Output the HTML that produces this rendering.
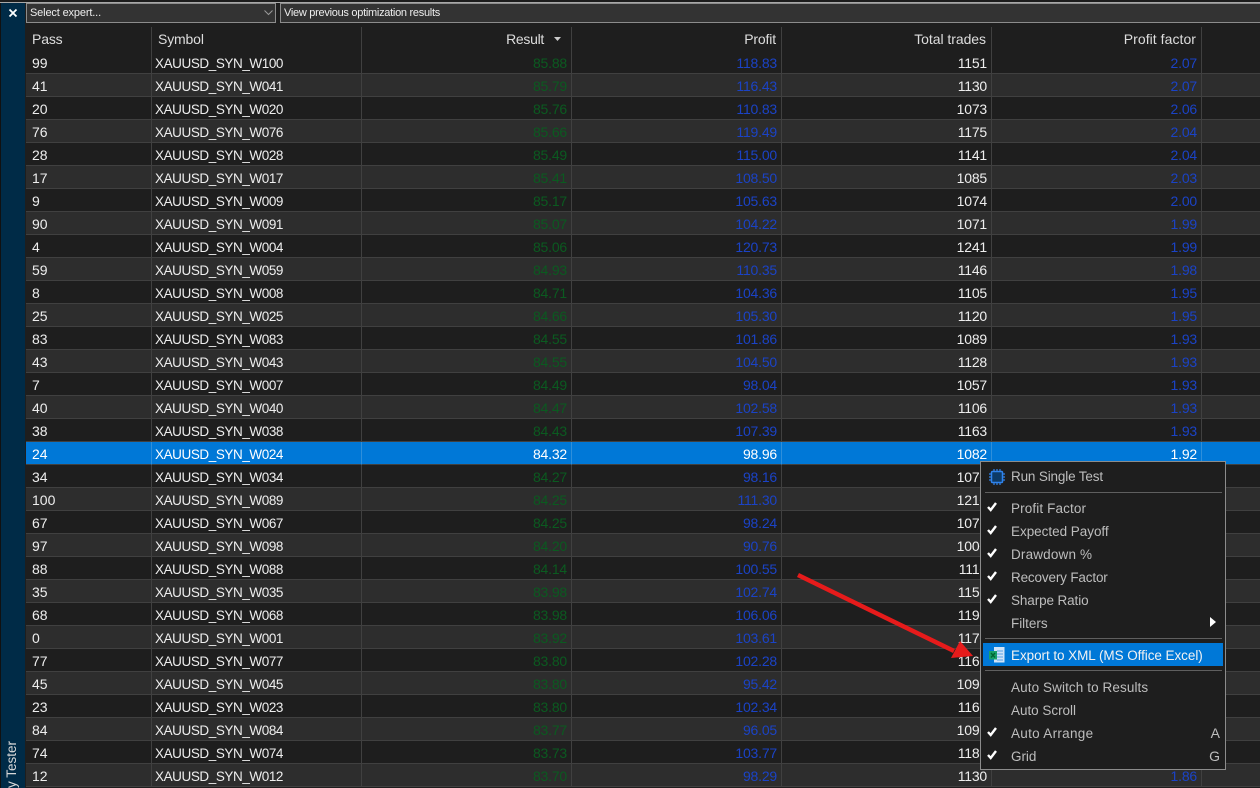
<!DOCTYPE html>
<html><head><meta charset="utf-8"><title>Strategy Tester</title>
<style>
html,body{margin:0;padding:0;width:1260px;height:788px;overflow:hidden;background:#1e1e1e}
body{position:relative;font-family:"Liberation Sans",sans-serif;font-size:14px;color:#eee}
#top{position:absolute;left:0;top:0;width:1260px;height:2px;background:#1c1c1c}
#bar{position:absolute;left:0;top:2px;width:1260px;height:22px;background:#1e1e1e}
#side{position:absolute;left:0;top:3px;width:25px;height:785px;background:#002b47;overflow:hidden;border-left:1px solid #111;box-sizing:border-box}
#side span{position:absolute;left:-14px;top:752px;width:50px;height:16px;overflow:hidden;line-height:16px;font-size:13.5px;color:#d8d8d8;transform:rotate(-90deg);transform-origin:center;text-align:left;white-space:nowrap}
.box{position:absolute;top:3px;height:18px;border:1px solid #8c8c8c;background:#333;font-size:11px;line-height:18px;color:#eee;white-space:nowrap}
#sel{left:26px;width:248px;padding:0;letter-spacing:-.15px}
#sel span{margin-left:3px}
#view{left:280px;width:979px;border-right:0;letter-spacing:-.28px}
#view span{margin-left:3px}
#hline{position:absolute;left:0;top:2px;width:1260px;height:1px;background:#a8a8a8}
table{position:absolute;left:26px;top:51px;border-collapse:separate;border-spacing:0;table-layout:fixed;width:1234px}
td{height:20px;padding:2px 4px 0 0;border-bottom:1px solid #404040;border-right:1px solid #404040;white-space:nowrap;overflow:hidden;line-height:20px;text-align:right;box-sizing:content-box;letter-spacing:-.2px}
td:nth-child(1){text-align:left;padding:2px 0 0 6px;letter-spacing:0}
td:nth-child(2){text-align:left;height:19px;line-height:19px;padding:3px 0 0 3px;font-size:13.5px;letter-spacing:-.42px}
td:nth-child(3){color:#0b5a20}
td:nth-child(4),td:nth-child(6){color:#1b43c6}
td:nth-child(7){border-right:0;padding:2px 0 0 0}
tr:nth-child(even) td{background:#2d2d2d}
tr:nth-child(odd) td{background:#1e1e1e}
tr.s td{background:#0078d7;color:#fff;border-color:#2e8fdb;border-bottom-color:#404040}
.h{position:absolute;top:27px;height:24px;line-height:24px;color:#ddd;font-size:14px;white-space:nowrap;letter-spacing:-.15px}
.v{position:absolute;top:27px;width:1px;height:24px;background:#404040}
#menu{position:absolute;left:980px;top:461px;width:244px;height:307px;background:#1e1e1e;border:1px solid #8c8c8c;color:#bdbdbd}
#menu .i{position:absolute;left:30px;height:23px;line-height:23px;font-size:13.5px;white-space:nowrap;letter-spacing:-.03px}
#menu .k{position:absolute;right:5px;height:23px;line-height:23px;font-size:14px}
#menu .l{position:absolute;left:4px;width:237px;height:1px;background:#5f5f5f}
#menu .c{position:absolute;left:5px;width:12px;height:12px}
#hl{position:absolute;left:2px;top:181px;width:240px;height:23px;background:#0078d7}
svg{display:block}
</style></head><body>
<div id="bar"></div><div id="top"></div>
<div id="hline"></div>
<div id="side"><span>y Tester</span></div>
<svg style="position:absolute;left:8px;top:8px" width="10" height="10" viewBox="0 0 10 10"><path d="M1.5 1.5L8.5 8.5M8.5 1.5L1.5 8.5" stroke="#fff" stroke-width="1.8"/></svg>
<div class="box" id="sel"><span>Select expert...</span><svg style="position:absolute;left:237px;top:6px" width="9" height="6" viewBox="0 0 9 6"><path d="M.5 .5L4.5 4.5L8.5 .5" fill="none" stroke="#999" stroke-width="1"/></svg></div>
<div class="box" id="view"><span>View previous optimization results</span></div>

<div class="h" style="left:32px">Pass</div>
<div class="h" style="left:158px">Symbol</div>
<div class="h" style="right:716px;letter-spacing:-.3px">Result</div>
<svg style="position:absolute;left:553px;top:37px" width="9" height="5" viewBox="0 0 9 5"><path d="M1 0H8L4.5 4Z" fill="#ccc"/></svg>
<div class="h" style="right:484px">Profit</div>
<div class="h" style="right:274px;letter-spacing:-.05px">Total trades</div>
<div class="h" style="right:64px;letter-spacing:.05px">Profit factor</div>
<div class="v" style="left:151px"></div><div class="v" style="left:361px"></div><div class="v" style="left:571px"></div><div class="v" style="left:781px"></div><div class="v" style="left:991px"></div><div class="v" style="left:1201px"></div>

<table>
<colgroup><col style="width:126px"><col style="width:210px"><col style="width:210px"><col style="width:210px"><col style="width:210px"><col style="width:210px"><col style="width:58px"></colgroup>
<tbody>
<tr><td>99</td><td>XAUUSD_SYN_W100</td><td>85.88</td><td>118.83</td><td>1151</td><td>2.07</td><td></td></tr>
<tr><td>41</td><td>XAUUSD_SYN_W041</td><td>85.79</td><td>116.43</td><td>1130</td><td>2.07</td><td></td></tr>
<tr><td>20</td><td>XAUUSD_SYN_W020</td><td>85.76</td><td>110.83</td><td>1073</td><td>2.06</td><td></td></tr>
<tr><td>76</td><td>XAUUSD_SYN_W076</td><td>85.66</td><td>119.49</td><td>1175</td><td>2.04</td><td></td></tr>
<tr><td>28</td><td>XAUUSD_SYN_W028</td><td>85.49</td><td>115.00</td><td>1141</td><td>2.04</td><td></td></tr>
<tr><td>17</td><td>XAUUSD_SYN_W017</td><td>85.41</td><td>108.50</td><td>1085</td><td>2.03</td><td></td></tr>
<tr><td>9</td><td>XAUUSD_SYN_W009</td><td>85.17</td><td>105.63</td><td>1074</td><td>2.00</td><td></td></tr>
<tr><td>90</td><td>XAUUSD_SYN_W091</td><td>85.07</td><td>104.22</td><td>1071</td><td>1.99</td><td></td></tr>
<tr><td>4</td><td>XAUUSD_SYN_W004</td><td>85.06</td><td>120.73</td><td>1241</td><td>1.99</td><td></td></tr>
<tr><td>59</td><td>XAUUSD_SYN_W059</td><td>84.93</td><td>110.35</td><td>1146</td><td>1.98</td><td></td></tr>
<tr><td>8</td><td>XAUUSD_SYN_W008</td><td>84.71</td><td>104.36</td><td>1105</td><td>1.95</td><td></td></tr>
<tr><td>25</td><td>XAUUSD_SYN_W025</td><td>84.66</td><td>105.30</td><td>1120</td><td>1.95</td><td></td></tr>
<tr><td>83</td><td>XAUUSD_SYN_W083</td><td>84.55</td><td>101.86</td><td>1089</td><td>1.93</td><td></td></tr>
<tr><td>43</td><td>XAUUSD_SYN_W043</td><td>84.55</td><td>104.50</td><td>1128</td><td>1.93</td><td></td></tr>
<tr><td>7</td><td>XAUUSD_SYN_W007</td><td>84.49</td><td>98.04</td><td>1057</td><td>1.93</td><td></td></tr>
<tr><td>40</td><td>XAUUSD_SYN_W040</td><td>84.47</td><td>102.58</td><td>1106</td><td>1.93</td><td></td></tr>
<tr><td>38</td><td>XAUUSD_SYN_W038</td><td>84.43</td><td>107.39</td><td>1163</td><td>1.93</td><td></td></tr>
<tr class="s"><td>24</td><td>XAUUSD_SYN_W024</td><td style="color:#fff">84.32</td><td style="color:#fff">98.96</td><td>1082</td><td style="color:#fff">1.92</td><td></td></tr>
<tr><td>34</td><td>XAUUSD_SYN_W034</td><td>84.27</td><td>98.16</td><td>1070</td><td></td><td></td></tr>
<tr><td>100</td><td>XAUUSD_SYN_W089</td><td>84.25</td><td>111.30</td><td>1210</td><td></td><td></td></tr>
<tr><td>67</td><td>XAUUSD_SYN_W067</td><td>84.25</td><td>98.24</td><td>1070</td><td></td><td></td></tr>
<tr><td>97</td><td>XAUUSD_SYN_W098</td><td>84.20</td><td>90.76</td><td>1000</td><td></td><td></td></tr>
<tr><td>88</td><td>XAUUSD_SYN_W088</td><td>84.14</td><td>100.55</td><td>1110</td><td></td><td></td></tr>
<tr><td>35</td><td>XAUUSD_SYN_W035</td><td>83.98</td><td>102.74</td><td>1150</td><td></td><td></td></tr>
<tr><td>68</td><td>XAUUSD_SYN_W068</td><td>83.98</td><td>106.06</td><td>1190</td><td></td><td></td></tr>
<tr><td>0</td><td>XAUUSD_SYN_W001</td><td>83.92</td><td>103.61</td><td>1170</td><td></td><td></td></tr>
<tr><td>77</td><td>XAUUSD_SYN_W077</td><td>83.80</td><td>102.28</td><td>1160</td><td></td><td></td></tr>
<tr><td>45</td><td>XAUUSD_SYN_W045</td><td>83.80</td><td>95.42</td><td>1090</td><td></td><td></td></tr>
<tr><td>23</td><td>XAUUSD_SYN_W023</td><td>83.80</td><td>102.34</td><td>1160</td><td></td><td></td></tr>
<tr><td>84</td><td>XAUUSD_SYN_W084</td><td>83.77</td><td>96.05</td><td>1090</td><td></td><td></td></tr>
<tr><td>74</td><td>XAUUSD_SYN_W074</td><td>83.73</td><td>103.77</td><td>1180</td><td></td><td></td></tr>
<tr><td>12</td><td>XAUUSD_SYN_W012</td><td>83.70</td><td>98.29</td><td>1130</td><td>1.86</td><td></td></tr>
</tbody></table>

<svg style="position:absolute;left:780px;top:560px" width="210" height="110" viewBox="0 0 210 110"><path d="M18 15L174 91" stroke="#e61b1b" stroke-width="4.5" fill="none"/><path d="M180 81L171 98L193 96Z" fill="#e61b1b"/></svg>

<div id="menu">
<div id="hl"></div>
<svg style="position:absolute;left:8px;top:7px" width="16" height="16" viewBox="0 0 16 16"><rect x="2.5" y="2.5" width="11" height="11" rx="1" fill="#0d3a66" stroke="#2f83ec" stroke-width="1.5"/><path d="M5 0V2M8 0V2M11 0V2M5 14V16M8 14V16M11 14V16M0 5H2M0 8H2M0 11H2M14 5H16M14 8H16M14 11H16" stroke="#2f83ec" stroke-width="1.2"/></svg>
<div class="i" style="top:3px;letter-spacing:-.16px">Run Single Test</div>
<div class="l" style="top:30px"></div>
<div class="i" style="top:35px;letter-spacing:.12px">Profit Factor</div>
<div class="i" style="top:58px">Expected Payoff</div>
<div class="i" style="top:81px;letter-spacing:.17px">Drawdown %</div>
<div class="i" style="top:104px;letter-spacing:-.16px">Recovery Factor</div>
<div class="i" style="top:127px;letter-spacing:-.11px">Sharpe Ratio</div>
<div class="i" style="top:150px">Filters</div>
<svg style="position:absolute;left:229px;top:155px" width="6" height="10" viewBox="0 0 6 10"><path d="M0 0L6 5L0 10Z" fill="#fff"/></svg>
<div class="l" style="top:176px"></div>
<svg style="position:absolute;left:8px;top:185px" width="16" height="16" viewBox="0 0 16 16"><rect x="5" y="0" width="10.5" height="15.5" fill="#cfe3f7"/><path d="M8 4H14M8 7H14M8 10H14M8 13H14" stroke="#5aa0e6" stroke-width="1"/><rect x="0" y="4" width="8" height="8.5" fill="#18a06a"/><path d="M2 6L6 10.5M6 6L2 10.5" stroke="#063" stroke-width="1.4"/></svg>
<div class="i" style="top:182px;color:#f2f2f2;letter-spacing:-.06px">Export to XML (MS Office Excel)</div>
<div class="l" style="top:208px"></div>
<div class="i" style="top:214px;letter-spacing:.1px">Auto Switch to Results</div>
<div class="i" style="top:237px">Auto Scroll</div>
<div class="i" style="top:260px;letter-spacing:.3px">Auto Arrange</div><div class="k" style="top:260px">A</div>
<div class="i" style="top:283px">Grid</div><div class="k" style="top:283px">G</div>
<svg class="c" style="top:39px" viewBox="0 0 12 12"><path d="M2 6L4.7 9L10 2" fill="none" stroke="#fff" stroke-width="2.4"/></svg>
<svg class="c" style="top:62px" viewBox="0 0 12 12"><path d="M2 6L4.7 9L10 2" fill="none" stroke="#fff" stroke-width="2.4"/></svg>
<svg class="c" style="top:85px" viewBox="0 0 12 12"><path d="M2 6L4.7 9L10 2" fill="none" stroke="#fff" stroke-width="2.4"/></svg>
<svg class="c" style="top:108px" viewBox="0 0 12 12"><path d="M2 6L4.7 9L10 2" fill="none" stroke="#fff" stroke-width="2.4"/></svg>
<svg class="c" style="top:131px" viewBox="0 0 12 12"><path d="M2 6L4.7 9L10 2" fill="none" stroke="#fff" stroke-width="2.4"/></svg>
<svg class="c" style="top:264px" viewBox="0 0 12 12"><path d="M2 6L4.7 9L10 2" fill="none" stroke="#fff" stroke-width="2.4"/></svg>
<svg class="c" style="top:287px" viewBox="0 0 12 12"><path d="M2 6L4.7 9L10 2" fill="none" stroke="#fff" stroke-width="2.4"/></svg>
</div>
</body></html>
